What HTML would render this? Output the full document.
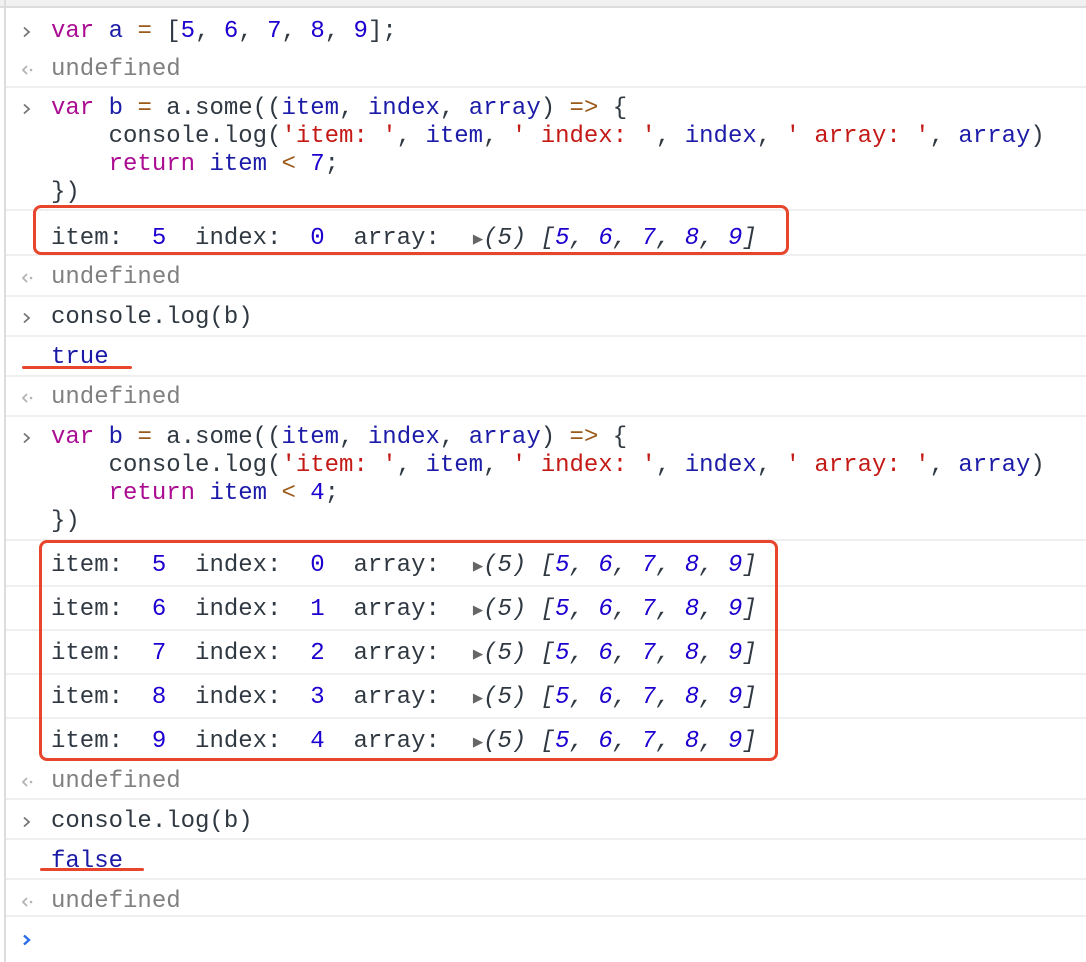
<!DOCTYPE html>
<html><head><meta charset="utf-8"><style>
html,body{margin:0;padding:0;background:#fff;width:1086px;height:962px;overflow:hidden;position:relative}
.t{position:absolute;left:51px;margin-top:2px;font-family:"Liberation Mono","DejaVu Sans Mono",monospace;font-size:24px;line-height:28px;white-space:pre;color:#303942}
.p{position:absolute;left:20px;width:14px;height:14px;margin-top:9px}
.s{position:absolute;left:6px;right:0;height:2px;background:#efefef}
.k{color:#aa0d91}.v{color:#1c1ca8}.n{color:#1c00cf}.o{color:#9b5a1b}.r{color:#c41a16}.g{color:#808080}
.i{font-style:italic}
.tri{display:inline-block;width:14.4px;text-align:right;font-size:17px;color:#666;font-style:normal}
.box{position:absolute;border:3px solid #e8452d;border-radius:8px}
.ul{position:absolute;height:3px;background:#e8452d;border-radius:2px}
</style></head><body>
<svg width="0" height="0" style="position:absolute">
<defs>
<symbol id="pr" viewBox="0 0 14 14"><path d="M4 2.5 L9 7 L4 11.5" fill="none" stroke="#777" stroke-width="1.8"/></symbol>
<symbol id="pb" viewBox="0 0 14 14"><path d="M4 2.5 L9 7 L4 11.5" fill="none" stroke="#2a6fe8" stroke-width="2.4"/></symbol>
<symbol id="un" viewBox="0 0 14 14"><path d="M7 3 L3 7 L7 11" fill="none" stroke="#b5b5b5" stroke-width="1.8"/><circle cx="11" cy="7" r="1.3" fill="#b5b5b5"/></symbol>
</defs></svg>
<div style="position:absolute;left:0;top:0;width:1086px;height:6px;background:#f1f1f1"></div>
<div style="position:absolute;left:0;top:6px;width:1086px;height:2px;background:#dcdcdc"></div>
<div style="position:absolute;left:4px;top:0;width:2px;height:962px;background:#dcdcdc"></div>

<div class="s" style="top:86px"></div>
<div class="s" style="top:209px"></div>
<div class="s" style="top:254px"></div>
<div class="s" style="top:295px"></div>
<div class="s" style="top:335px"></div>
<div class="s" style="top:375px"></div>
<div class="s" style="top:415px"></div>
<div class="s" style="top:539px"></div>
<div class="s" style="top:585px"></div>
<div class="s" style="top:629px"></div>
<div class="s" style="top:673px"></div>
<div class="s" style="top:717px"></div>
<div class="s" style="top:798px"></div>
<div class="s" style="top:838px"></div>
<div class="s" style="top:878px"></div>
<div class="s" style="top:915px"></div>

<svg class="p" style="top:16px"><use href="#pr"/></svg>
<div class="t" style="top:16px"><span class="k">var</span> <span class="v">a</span> <span class="o">=</span> [<span class="n">5</span>, <span class="n">6</span>, <span class="n">7</span>, <span class="n">8</span>, <span class="n">9</span>];</div>
<svg class="p" style="top:54px"><use href="#un"/></svg>
<div class="t g" style="top:54px">undefined</div>

<svg class="p" style="top:93px"><use href="#pr"/></svg>
<div class="t" style="top:93px"><span class="k">var</span> <span class="v">b</span> <span class="o">=</span> a.some((<span class="v">item</span>, <span class="v">index</span>, <span class="v">array</span>) <span class="o">=&gt;</span> {
    console.log(<span class="r">'item: '</span>, <span class="v">item</span>, <span class="r">' index: '</span>, <span class="v">index</span>, <span class="r">' array: '</span>, <span class="v">array</span>)
    <span class="k">return</span> <span class="v">item</span> <span class="o">&lt;</span> <span class="n">7</span>;
})</div>
<div class="t" style="top:223px">item:  <span class="n">5</span>  index:  <span class="n">0</span>  array:  <span class="i"><span class="tri">▶</span>(5) [<span class="n">5</span>, <span class="n">6</span>, <span class="n">7</span>, <span class="n">8</span>, <span class="n">9</span>]</span></div>
<div class="box" style="left:33px;top:205px;width:750px;height:44px"></div>

<svg class="p" style="top:262px"><use href="#un"/></svg>
<div class="t g" style="top:262px">undefined</div>
<svg class="p" style="top:302px"><use href="#pr"/></svg>
<div class="t" style="top:302px">console.log(b)</div>
<div class="t" style="top:342px;color:#1a1aa6">true</div>
<div class="ul" style="left:22px;top:366px;width:110px"></div>
<svg class="p" style="top:382px"><use href="#un"/></svg>
<div class="t g" style="top:382px">undefined</div>

<svg class="p" style="top:422px"><use href="#pr"/></svg>
<div class="t" style="top:422px"><span class="k">var</span> <span class="v">b</span> <span class="o">=</span> a.some((<span class="v">item</span>, <span class="v">index</span>, <span class="v">array</span>) <span class="o">=&gt;</span> {
    console.log(<span class="r">'item: '</span>, <span class="v">item</span>, <span class="r">' index: '</span>, <span class="v">index</span>, <span class="r">' array: '</span>, <span class="v">array</span>)
    <span class="k">return</span> <span class="v">item</span> <span class="o">&lt;</span> <span class="n">4</span>;
})</div>

<div class="t" style="top:550px">item:  <span class="n">5</span>  index:  <span class="n">0</span>  array:  <span class="i"><span class="tri">▶</span>(5) [<span class="n">5</span>, <span class="n">6</span>, <span class="n">7</span>, <span class="n">8</span>, <span class="n">9</span>]</span></div>
<div class="t" style="top:594px">item:  <span class="n">6</span>  index:  <span class="n">1</span>  array:  <span class="i"><span class="tri">▶</span>(5) [<span class="n">5</span>, <span class="n">6</span>, <span class="n">7</span>, <span class="n">8</span>, <span class="n">9</span>]</span></div>
<div class="t" style="top:638px">item:  <span class="n">7</span>  index:  <span class="n">2</span>  array:  <span class="i"><span class="tri">▶</span>(5) [<span class="n">5</span>, <span class="n">6</span>, <span class="n">7</span>, <span class="n">8</span>, <span class="n">9</span>]</span></div>
<div class="t" style="top:682px">item:  <span class="n">8</span>  index:  <span class="n">3</span>  array:  <span class="i"><span class="tri">▶</span>(5) [<span class="n">5</span>, <span class="n">6</span>, <span class="n">7</span>, <span class="n">8</span>, <span class="n">9</span>]</span></div>
<div class="t" style="top:726px">item:  <span class="n">9</span>  index:  <span class="n">4</span>  array:  <span class="i"><span class="tri">▶</span>(5) [<span class="n">5</span>, <span class="n">6</span>, <span class="n">7</span>, <span class="n">8</span>, <span class="n">9</span>]</span></div>
<div class="box" style="left:39px;top:540px;width:733px;height:215px"></div>

<svg class="p" style="top:766px"><use href="#un"/></svg>
<div class="t g" style="top:766px">undefined</div>
<svg class="p" style="top:806px"><use href="#pr"/></svg>
<div class="t" style="top:806px">console.log(b)</div>
<div class="t" style="top:846px;color:#1a1aa6">false</div>
<div class="ul" style="left:40px;top:868px;width:104px"></div>
<svg class="p" style="top:886px"><use href="#un"/></svg>
<div class="t g" style="top:886px">undefined</div>
<svg class="p" style="top:924px"><use href="#pb"/></svg>
</body></html>
